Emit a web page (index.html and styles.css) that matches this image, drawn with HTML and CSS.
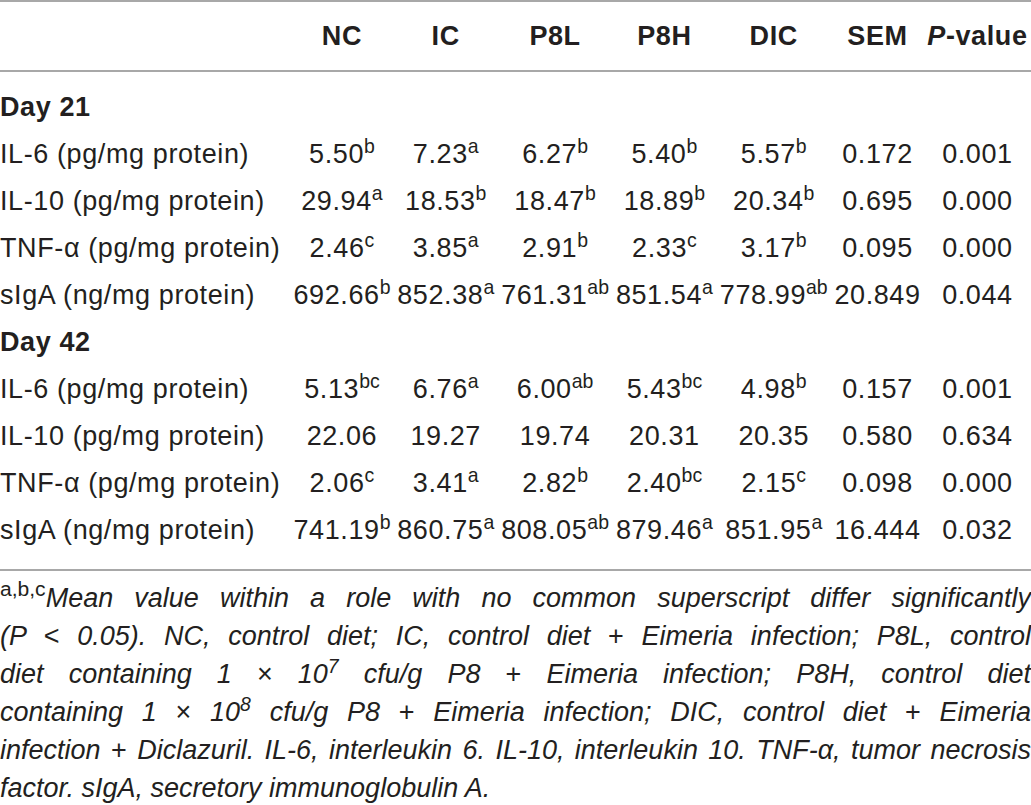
FILE: index.html
```html
<!DOCTYPE html>
<html lang="en">
<head>
  <meta charset="UTF-8">
  <title>Cytokines table</title>
  <link rel="stylesheet" href="styles.css">
</head>
<body>
  <table class="data">
    <thead>
      <tr>
        <th class="label"></th>
        <th>NC</th>
        <th>IC</th>
        <th>P8L</th>
        <th>P8H</th>
        <th>DIC</th>
        <th>SEM</th>
        <th><i>P</i>-value</th>
      </tr>
    </thead>
    <tbody>
      <tr class="first">
        <td class="label group" colspan="8">Day 21</td>
      </tr>
      <tr>
        <td class="label">IL-6 (pg/mg protein)</td>
        <td>5.50<sup>b</sup></td>
        <td>7.23<sup>a</sup></td>
        <td>6.27<sup>b</sup></td>
        <td>5.40<sup>b</sup></td>
        <td>5.57<sup>b</sup></td>
        <td>0.172</td>
        <td>0.001</td>
      </tr>
      <tr>
        <td class="label">IL-10 (pg/mg protein)</td>
        <td>29.94<sup>a</sup></td>
        <td>18.53<sup>b</sup></td>
        <td>18.47<sup>b</sup></td>
        <td>18.89<sup>b</sup></td>
        <td>20.34<sup>b</sup></td>
        <td>0.695</td>
        <td>0.000</td>
      </tr>
      <tr>
        <td class="label">TNF-α (pg/mg protein)</td>
        <td>2.46<sup>c</sup></td>
        <td>3.85<sup>a</sup></td>
        <td>2.91<sup>b</sup></td>
        <td>2.33<sup>c</sup></td>
        <td>3.17<sup>b</sup></td>
        <td>0.095</td>
        <td>0.000</td>
      </tr>
      <tr>
        <td class="label">sIgA (ng/mg protein)</td>
        <td>692.66<sup>b</sup></td>
        <td>852.38<sup>a</sup></td>
        <td>761.31<sup>ab</sup></td>
        <td>851.54<sup>a</sup></td>
        <td>778.99<sup>ab</sup></td>
        <td>20.849</td>
        <td>0.044</td>
      </tr>
      <tr>
        <td class="label group" colspan="8">Day 42</td>
      </tr>
      <tr>
        <td class="label">IL-6 (pg/mg protein)</td>
        <td>5.13<sup>bc</sup></td>
        <td>6.76<sup>a</sup></td>
        <td>6.00<sup>ab</sup></td>
        <td>5.43<sup>bc</sup></td>
        <td>4.98<sup>b</sup></td>
        <td>0.157</td>
        <td>0.001</td>
      </tr>
      <tr>
        <td class="label">IL-10 (pg/mg protein)</td>
        <td>22.06</td>
        <td>19.27</td>
        <td>19.74</td>
        <td>20.31</td>
        <td>20.35</td>
        <td>0.580</td>
        <td>0.634</td>
      </tr>
      <tr>
        <td class="label">TNF-α (pg/mg protein)</td>
        <td>2.06<sup>c</sup></td>
        <td>3.41<sup>a</sup></td>
        <td>2.82<sup>b</sup></td>
        <td>2.40<sup>bc</sup></td>
        <td>2.15<sup>c</sup></td>
        <td>0.098</td>
        <td>0.000</td>
      </tr>
      <tr class="last">
        <td class="label">sIgA (ng/mg protein)</td>
        <td>741.19<sup>b</sup></td>
        <td>860.75<sup>a</sup></td>
        <td>808.05<sup>ab</sup></td>
        <td>879.46<sup>a</sup></td>
        <td>851.95<sup>a</sup></td>
        <td>16.444</td>
        <td>0.032</td>
      </tr>
    </tbody>
  </table>

  <!-- footnote kept on the same line breaks as the printed table -->
  <p class="note">
    <span class="line"><sup class="marks">a,b,c</sup>Mean value within a role with no common superscript differ significantly</span>
    <span class="line">(P <span class="op">&lt;</span> 0.05). NC, control diet; IC, control diet <span class="op">+</span> Eimeria infection; P8L, control</span>
    <span class="line">diet containing 1 <span class="op">×</span> 10<sup>7</sup> cfu/g P8 <span class="op">+</span> Eimeria infection; P8H, control diet</span>
    <span class="line">containing 1 <span class="op">×</span> 10<sup>8</sup> cfu/g P8 <span class="op">+</span> Eimeria infection; DIC, control diet <span class="op">+</span> Eimeria</span>
    <span class="line">infection <span class="op">+</span> Diclazuril. IL-6, interleukin 6. IL-10, interleukin 10. TNF-α, tumor necrosis</span>
    <span class="line">factor. sIgA, secretory immunoglobulin A.</span>
  </p>
</body>
</html>
```

FILE: styles.css
```css
body {
  margin: 0;
  font-family: "Liberation Sans", Arial, sans-serif;
  color: #231f20;
  background: #fff;
}

.data {
  width: 100%;
  border-collapse: collapse;
  font-size: 27px;
  letter-spacing: 0.6px;
}

.data thead tr {
  border-top: 2px solid #a8a8a8;
  border-bottom: 2px solid #a8a8a8;
}

.data th {
  height: 68px;
  padding: 0 2px;
  font-weight: bold;
  text-align: center;
}

.data td {
  height: 47px;
  padding: 0 2px;
  text-align: center;
  white-space: nowrap;
}

.data .label {
  text-align: left;
  padding-left: 0;
}

.data .group {
  font-weight: bold;
}

.data tr.first td {
  padding-top: 12px;
}

.data tr.last td {
  padding-bottom: 15px;
}

.data tbody {
  border-bottom: 2px solid #a8a8a8;
}

sup {
  font-size: 0.72em;
  line-height: 0;
  vertical-align: 0.5em;
  letter-spacing: 0;
}

.note {
  margin: 8px 0 0;
  font-size: 27px;
  font-style: italic;
  line-height: 38px;
  text-align: justify;
}

.note .line {
  display: block;
  text-align-last: justify;
}

.note .line:last-child {
  text-align-last: left;
}

.note .marks {
  font-style: normal;
  font-size: 0.78em;
}

.note .op {
  font-style: normal;
}
```
